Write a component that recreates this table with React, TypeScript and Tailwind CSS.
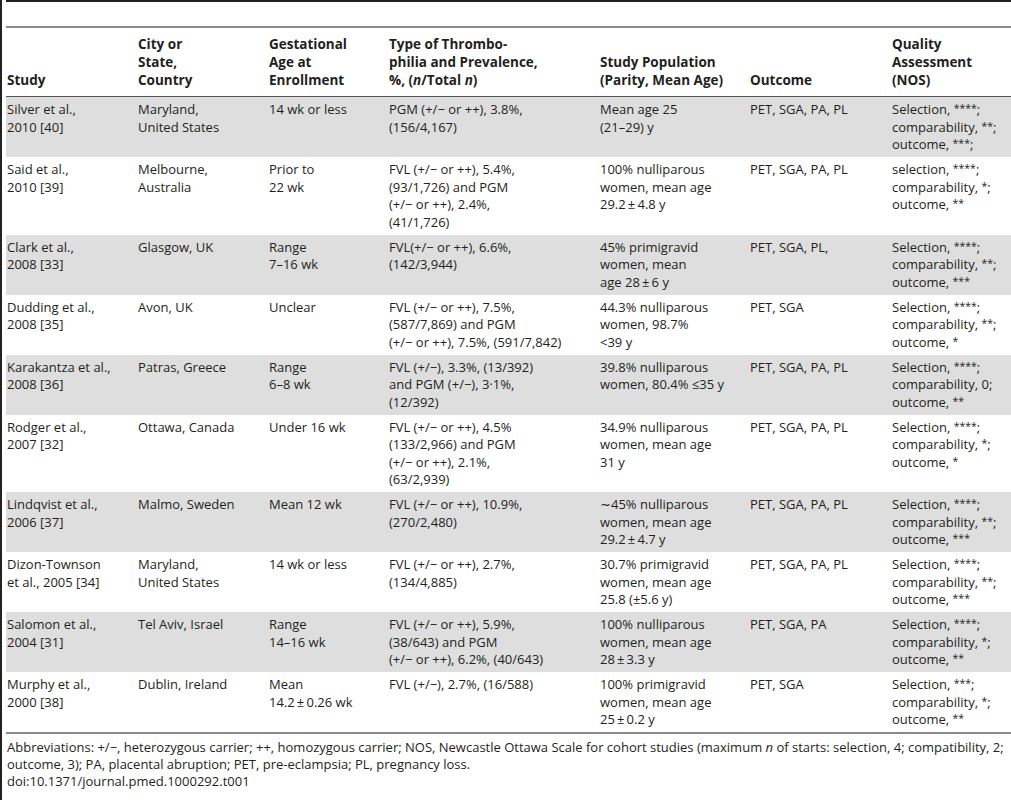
import React from "react";

const M = "\u2212";
const PM = "\u2009\u00b1\u2009";

const rows: string[][][] = [
  [
    ["Silver et al.,", "2010 [40]"],
    ["Maryland,", "United States"],
    ["14 wk or less"],
    [`PGM (+/${M} or ++), 3.8%,`, "(156/4,167)"],
    ["Mean age 25", "(21\u201329) y"],
    ["PET, SGA, PA, PL"],
    ["Selection, ****;", "comparability, **;", "outcome, ***;"],
  ],
  [
    ["Said et al.,", "2010 [39]"],
    ["Melbourne,", "Australia"],
    ["Prior to", "22 wk"],
    [`FVL (+/${M} or ++), 5.4%,`, "(93/1,726) and PGM", `(+/${M} or ++), 2.4%,`, "(41/1,726)"],
    ["100% nulliparous", "women, mean age", `29.2${PM}4.8 y`],
    ["PET, SGA, PA, PL"],
    ["selection, ****;", "comparability, *;", "outcome, **"],
  ],
  [
    ["Clark et al.,", "2008 [33]"],
    ["Glasgow, UK"],
    ["Range", "7\u201316 wk"],
    [`FVL(+/${M} or ++), 6.6%,`, "(142/3,944)"],
    ["45% primigravid", "women, mean", `age 28${PM}6 y`],
    ["PET, SGA, PL,"],
    ["Selection, ****;", "comparability, **;", "outcome, ***"],
  ],
  [
    ["Dudding et al.,", "2008 [35]"],
    ["Avon, UK"],
    ["Unclear"],
    [`FVL (+/${M} or ++), 7.5%,`, "(587/7,869) and PGM", `(+/${M} or ++), 7.5%, (591/7,842)`],
    ["44.3% nulliparous", "women, 98.7%", "<39 y"],
    ["PET, SGA"],
    ["Selection, ****;", "comparability, **;", "outcome, *"],
  ],
  [
    ["Karakantza et al.,", "2008 [36]"],
    ["Patras, Greece"],
    ["Range", "6\u20138 wk"],
    [`FVL (+/${M}), 3.3%, (13/392)`, `and PGM (+/${M}), 3\u00b71%,`, "(12/392)"],
    ["39.8% nulliparous", "women, 80.4% \u226435 y"],
    ["PET, SGA, PA, PL"],
    ["Selection, ****;", "comparability, 0;", "outcome, **"],
  ],
  [
    ["Rodger et al.,", "2007 [32]"],
    ["Ottawa, Canada"],
    ["Under 16 wk"],
    [`FVL (+/${M} or ++), 4.5%`, "(133/2,966) and PGM", `(+/${M} or ++), 2.1%,`, "(63/2,939)"],
    ["34.9% nulliparous", "women, mean age", "31 y"],
    ["PET, SGA, PA, PL"],
    ["Selection, ****;", "comparability, *;", "outcome, *"],
  ],
  [
    ["Lindqvist et al.,", "2006 [37]"],
    ["Malmo, Sweden"],
    ["Mean 12 wk"],
    [`FVL (+/${M} or ++), 10.9%,`, "(270/2,480)"],
    ["\u223c45% nulliparous", "women, mean age", `29.2${PM}4.7 y`],
    ["PET, SGA, PA, PL"],
    ["Selection, ****;", "comparability, **;", "outcome, ***"],
  ],
  [
    ["Dizon-Townson", "et al., 2005 [34]"],
    ["Maryland,", "United States"],
    ["14 wk or less"],
    [`FVL (+/${M} or ++), 2.7%,`, "(134/4,885)"],
    ["30.7% primigravid", "women, mean age", `25.8 (\u00b15.6 y)`],
    ["PET, SGA, PA, PL"],
    ["Selection, ****;", "comparability, **;", "outcome, ***"],
  ],
  [
    ["Salomon et al.,", "2004 [31]"],
    ["Tel Aviv, Israel"],
    ["Range", "14\u201316 wk"],
    [`FVL (+/${M} or ++), 5.9%,`, "(38/643) and PGM", `(+/${M} or ++), 6.2%, (40/643)`],
    ["100% nulliparous", "women, mean age", `28${PM}3.3 y`],
    ["PET, SGA, PA"],
    ["Selection, ****;", "comparability, *;", "outcome, **"],
  ],
  [
    ["Murphy et al.,", "2000 [38]"],
    ["Dublin, Ireland"],
    ["Mean", `14.2${PM}0.26 wk`],
    [`FVL (+/${M}), 2.7%, (16/588)`],
    ["100% primigravid", "women, mean age", `25${PM}0.2 y`],
    ["PET, SGA"],
    ["Selection, ***;", "comparability, *;", "outcome, **"],
  ],
];

const headers: React.ReactNode[][] = [
  ["Study"],
  ["City or", "State,", "Country"],
  ["Gestational", "Age at", "Enrollment"],
  [
    "Type of Thrombo-",
    "philia and Prevalence,",
    <span key="x">
      %, (<span className="italic">n</span>/Total <span className="italic">n</span>)
    </span>,
  ],
  ["Study Population", "(Parity, Mean Age)"],
  ["Outcome"],
  ["Quality", "Assessment", "(NOS)"],
];

const cols = "grid grid-cols-[131px_131px_120px_211px_150px_142px_1fr]";

function renderText(s: React.ReactNode): React.ReactNode {
  if (typeof s !== "string") return s;
  const parts = s.split(/(\*+)/);
  return parts.map((p, i) =>
    p.startsWith("*") ? (
      <span key={i} className="relative top-[-2px] text-[10.5px] leading-[0]">
        {p}
      </span>
    ) : (
      <React.Fragment key={i}>{p}</React.Fragment>
    )
  );
}

function Lines({ lines }: { lines: React.ReactNode[] }) {
  return (
    <div className="whitespace-nowrap pl-px">
      {lines.map((l, i) => (
        <div key={i}>{renderText(l)}</div>
      ))}
    </div>
  );
}

export default function App() {
  return (
    <div
      className="h-[800px] w-[1011px] overflow-hidden border-l-2 border-[#222] bg-white text-[#231f20]"
      style={{ fontFamily: '"Open Sans", "Noto Sans", sans-serif' }}
    >
      <div className="ml-[4px]">
        <div className="h-[2px] bg-[#222]" />
        <div className="h-[24px]" />
        <div className="h-[2px] bg-[#8a8a8a]" />
        <div className={`${cols} items-end pt-[7px] pb-[7px] text-[13.5px] font-bold leading-[18px]`}>
          {headers.map((h, i) => (
            <Lines key={i} lines={h} />
          ))}
        </div>
        <div className="h-px bg-[#555]" />
        {rows.map((r, i) => (
          <div
            key={i}
            className={`${cols} pt-[4px] pb-[3.5px] text-[13px] leading-[17.5px] ${
              i % 2 === 0 ? "bg-[#dedede]" : "bg-white"
            }`}
          >
            {r.map((c, j) => (
              <Lines key={j} lines={c} />
            ))}
          </div>
        ))}
        <div className="h-[2px] bg-[#8a8a8a]" />
        <div className="pt-[5px] pl-px text-[13px] leading-[17px] whitespace-nowrap">
          <div>
            Abbreviations: +/{M}, heterozygous carrier; ++, homozygous carrier; NOS, Newcastle Ottawa Scale for
            cohort studies (maximum <span className="italic">n</span> of starts: selection, 4; compatibility, 2;
          </div>
          <div>outcome, 3); PA, placental abruption; PET, pre-eclampsia; PL, pregnancy loss.</div>
          <div>doi:10.1371/journal.pmed.1000292.t001</div>
        </div>
      </div>
    </div>
  );
}
